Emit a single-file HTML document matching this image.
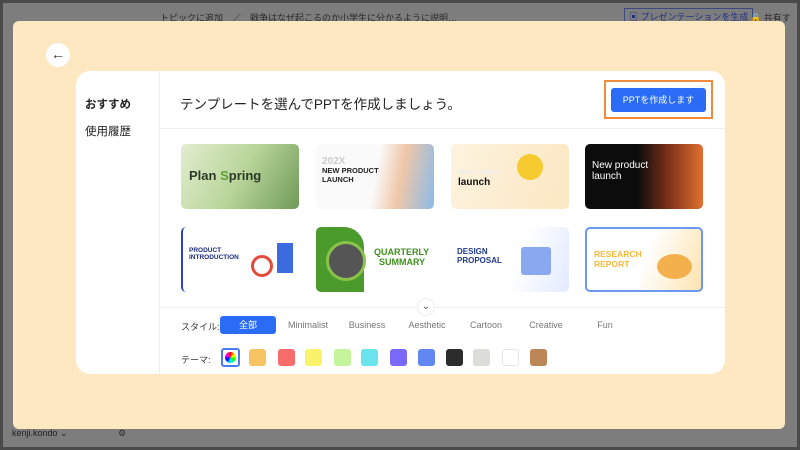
<!DOCTYPE html>
<html><head><meta charset="utf-8"><style>
*{margin:0;padding:0;box-sizing:border-box}
body{width:800px;height:450px;overflow:hidden;background:#7d7d7d;font-family:"Liberation Sans","Noto Sans CJK JP",sans-serif;position:relative}
.frame{position:absolute;inset:0;border:3px solid #4a4a4a}
.top{position:absolute;top:11px;font-size:9px;color:#2a2a2a}
.modal{position:absolute;left:13px;top:21px;width:772px;height:408px;background:#fde8c2;border-radius:6px}
.back{position:absolute;left:46px;top:43px;width:24px;height:24px;border-radius:50%;background:#fff;text-align:center;line-height:22px;font-size:14px;color:#333}
.card{position:absolute;left:76px;top:71px;width:649px;height:303px;background:#fff;border-radius:14px;overflow:hidden}
.side{position:absolute;left:0;top:0;width:84px;height:100%;border-right:1px solid #eee}
.side div{position:absolute;left:9px;font-size:11.5px;color:#222}
.hdr{position:absolute;left:84px;top:0;right:0;height:58px;border-bottom:1px solid #eee}
.ttl{position:absolute;left:104px;top:22px;font-size:13.5px;color:#222}
.ob{position:absolute;left:528px;top:9px;width:109px;height:39px;border:2px solid #f08a3c}
.bb{position:absolute;left:535px;top:17px;width:95px;height:24px;background:#2b6cf6;border-radius:3px;color:#fff;font-size:9px;text-align:center;line-height:24px}
.t{position:absolute;width:118px;height:65px;border-radius:5px;overflow:hidden}
.t span{position:absolute;font-weight:bold}
.line{position:absolute;left:84px;right:0;top:236px;border-top:1px solid #eee}
.chev{position:absolute;left:341px;top:227px;width:18px;height:18px;border-radius:50%;background:#fff;border:1px solid #eee;text-align:center;font-size:10px;line-height:16px;color:#555}
.lab{position:absolute;font-size:9px;color:#333}
.st{position:absolute;top:249px;font-size:9px;color:#777;transform:translateX(-50%)}
.all{position:absolute;left:144px;top:245px;width:56px;height:18px;background:#2b6cf6;border-radius:3px;color:#fff;font-size:9px;text-align:center;line-height:18px}
.sw{position:absolute;top:278px;width:17px;height:17px;border-radius:3px}
</style></head><body>
<div class="frame"></div>
<div class="top" style="left:160px">トピックに追加　／　戦争はなぜ起こるのか小学生に分かるように説明…</div>
<div class="top" style="left:624px;top:8px;border:1px solid #3a4a80;padding:1px 4px;color:#1d2f80">▣ プレゼンテーションを生成</div>
<div class="top" style="left:750px">🔒 共有す</div>
<div class="top" style="left:12px;top:428px;color:#222">kenji.kondo ⌄</div>
<div class="top" style="left:118px;top:428px">⚙</div>
<div class="modal"></div>
<div class="back">←</div>
<div class="card">
<div class="side"><div style="top:25px;font-weight:bold">おすすめ</div><div style="top:52px">使用履歴</div></div>
<div class="hdr"></div>
<div class="ttl">テンプレートを選んでPPTを作成しましょう。</div>
<div class="ob"></div><div class="bb">PPTを作成します</div>

<div class="t" style="left:105px;top:73px;background:linear-gradient(120deg,#e3edd0,#b9d59a 50%,#6f9a58)"><span style="left:8px;top:24px;font-size:13px;color:#2b3a25">Plan <b style="color:#5aa036">S</b>pring</span></div>
<div class="t" style="left:240px;top:73px;background:linear-gradient(100deg,#fafafa 50%,#f0c7a8 70%,#8cbbe8)"><span style="left:6px;top:12px;font-size:10px;color:#ccc">202X</span><span style="left:6px;top:22px;font-size:7.5px;color:#222">NEW PRODUCT<br>LAUNCH</span></div>
<div class="t" style="left:375px;top:73px;background:linear-gradient(110deg,#fdf3df,#fbe7c2)"><span style="left:7px;top:25px;font-size:7px;color:#eee">New product</span><span style="left:7px;top:33px;font-size:10px;color:#111">launch</span><span style="left:66px;top:10px;width:26px;height:26px;border-radius:50%;background:#f6cb30"></span></div>
<div class="t" style="left:509px;top:73px;background:linear-gradient(90deg,#0c0c0c 45%,#7a3018 70%,#e07030)"><span style="left:7px;top:16px;font-size:10px;color:#fff;font-weight:normal">New product<br>launch</span></div>

<div class="t" style="left:105px;top:156px;background:#fff;border-left:2px solid #2c40d0"><span style="left:6px;top:20px;font-size:6.5px;color:#1c2c7a">PRODUCT<br>INTRODUCTION</span><span style="left:68px;top:28px;width:22px;height:22px;border-radius:50%;border:3px solid #e24a3a;background:#fff"></span><span style="left:94px;top:16px;width:16px;height:30px;background:#3c6be0"></span></div>
<div class="t" style="left:240px;top:156px;background:#fff"><span style="left:0;top:0;width:48px;height:65px;background:#4a9b2c;border-radius:0 20px 0 0"></span><span style="left:10px;top:14px;width:40px;height:40px;border-radius:50%;background:#555;border:3px solid #8bc34a"></span><span style="left:58px;top:20px;font-size:9px;color:#3f8f1e">QUARTERLY<br>&nbsp;&nbsp;SUMMARY</span></div>
<div class="t" style="left:375px;top:156px;background:linear-gradient(110deg,#fff 55%,#e2eaff)"><span style="left:6px;top:20px;font-size:8px;color:#1e3a8a">DESIGN<br>PROPOSAL</span><span style="left:70px;top:20px;width:30px;height:28px;background:#8aa8f0;border-radius:3px"></span></div>
<div class="t" style="left:509px;top:156px;background:linear-gradient(110deg,#fff 50%,#fde4b0);border:2px solid #6b98f0"><span style="left:7px;top:20px;font-size:8.5px;color:#f6b83a">RESEARCH<br>REPORT</span><span style="left:70px;top:25px;width:35px;height:25px;border-radius:50%;background:#f3b04c"></span></div>

<div class="line"></div><div class="chev">⌄</div>
<div class="lab" style="left:105px;top:249px">スタイル:</div>
<div class="all">全部</div>
<div class="st" style="left:232px">Minimalist</div>
<div class="st" style="left:291px">Business</div>
<div class="st" style="left:351px">Aesthetic</div>
<div class="st" style="left:410px">Cartoon</div>
<div class="st" style="left:470px">Creative</div>
<div class="st" style="left:529px">Fun</div>
<div class="lab" style="left:105px;top:282px">テーマ:</div>
<div class="sw" style="left:145px;top:277px;width:19px;height:19px;border:2px solid #4a7cf0;background:#fff"><div style="margin:2px;width:11px;height:11px;border-radius:50%;background:conic-gradient(red,yellow,lime,cyan,blue,magenta,red)"></div></div>
<div class="sw" style="left:173px;background:#f7c463"></div>
<div class="sw" style="left:202px;background:#f86c6c"></div>
<div class="sw" style="left:229px;background:#f8f36a"></div>
<div class="sw" style="left:258px;background:#c4f59c"></div>
<div class="sw" style="left:285px;background:#6be3ec"></div>
<div class="sw" style="left:314px;background:#7a67fb"></div>
<div class="sw" style="left:342px;background:#6287f3"></div>
<div class="sw" style="left:370px;background:#2c2c2c"></div>
<div class="sw" style="left:397px;background:#dcddd8"></div>
<div class="sw" style="left:426px;background:#fff;border:1px solid #e6e6e6"></div>
<div class="sw" style="left:454px;background:#bd8656"></div>
</div>
</body></html>
